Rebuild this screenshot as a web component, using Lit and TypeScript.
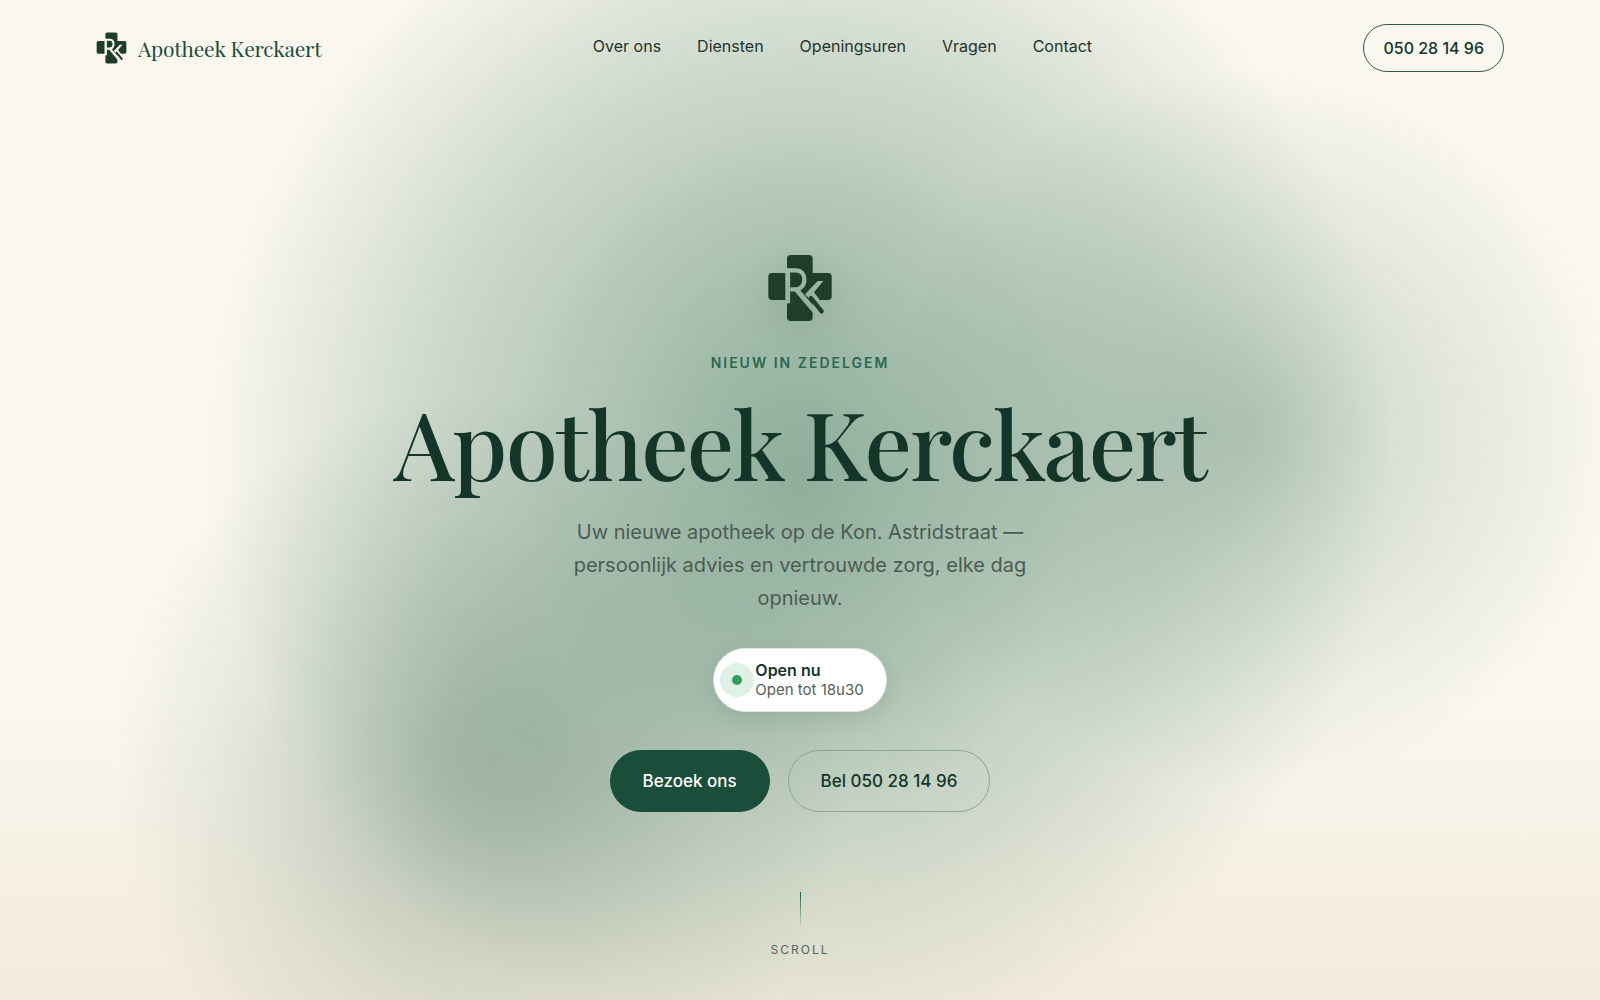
import { LitElement, html, css } from "lit";
import { customElement } from "lit/decorators.js";

@customElement("pharmacy-mark")
class PharmacyMark extends LitElement {
  static styles = css`
    :host {
      display: block;
    }
    .mark {
      display: block;
      width: 100%;
      height: 100%;
    }
  `;

  render() {
    return html`
      <svg class="mark" viewBox="81 42 198 204" aria-hidden="true">
        <mask id="cut" maskUnits="userSpaceOnUse" x="80" y="40" width="200" height="210">
          <rect x="80" y="40" width="200" height="210" fill="#fff" />
          <g fill="none" stroke="#000">
            <path d="M144 190V91H167C184 91 193 103 193 119C193 136 182 148 166 148H151" stroke-width="13" />
            <path d="M167 146L240 232" stroke-width="15" />
          </g>
          <path d="M136 84h8v106h-8zM233 123H250L222 157L242 184H218L206 174L195 163z" fill="#000" />
        </mask>
        <g fill="#1f3d2b" mask="url(#cut)">
          <rect x="141" y="45" width="77" height="198" rx="11" />
          <rect x="85" y="99" width="190" height="81" rx="11" />
        </g>
        <path d="M213 174L245 214" fill="none" stroke="#1f3d2b" stroke-width="13" stroke-linecap="round" />
      </svg>
    `;
  }
}

@customElement("app-root")
class AppRoot extends LitElement {
  static styles = css`
    :host {
      display: block;
      font-family: Inter, "Liberation Sans", sans-serif;
      font-size: 16px;
      color: #14352a;
    }
    a {
      color: inherit;
      text-decoration: none;
    }
    .page {
      box-sizing: border-box;
      min-height: 100vh;
      display: flex;
      flex-direction: column;
      background:
        radial-gradient(ellipse 17% 36% at 50% 48%, rgba(65, 120, 98, 0.3), rgba(65, 120, 98, 0.16) 45%, rgba(65, 120, 98, 0.04) 80%, rgba(65, 120, 98, 0) 100%),
        radial-gradient(ellipse 23% 36% at 78% 43%, rgba(70, 122, 95, 0.32), rgba(70, 122, 95, 0.28) 14%, rgba(70, 122, 95, 0.18) 40%, rgba(70, 122, 95, 0.1) 66%, rgba(70, 122, 95, 0.04) 88%, rgba(70, 122, 95, 0) 100%),
        radial-gradient(ellipse 23% 38% at 30% 77%, rgba(60, 105, 85, 0.38), rgba(60, 105, 85, 0.34) 16%, rgba(60, 105, 85, 0.22) 42%, rgba(60, 105, 85, 0.11) 66%, rgba(60, 105, 85, 0.04) 88%, rgba(60, 105, 85, 0) 100%),
        radial-gradient(ellipse 37% 61% at 50% 45%, rgba(80, 132, 106, 0.44), rgba(80, 132, 106, 0.38) 42%, rgba(80, 132, 106, 0.25) 65%, rgba(80, 132, 106, 0.07) 90%, rgba(80, 132, 106, 0) 100%),
        linear-gradient(#faf7ef 70%, #f2ebdb);
    }
    .header {
      display: flex;
      align-items: center;
      justify-content: space-between;
      padding: 24px 96px;
    }
    .brand {
      display: flex;
      align-items: center;
      gap: 11px;
      font-family: "Playfair Display", "Liberation Serif", serif;
      font-size: 21px;
      line-height: 28px;
      letter-spacing: -0.01em;
      color: #1b4d3b;
    }
    .brand-mark {
      width: 31px;
      height: 32px;
    }
    .nav {
      display: flex;
      gap: 36px;
      padding-bottom: 4px;
      color: #24332b;
    }
    .phone {
      padding: 13px 19px;
      border: 1px solid #2d5d49;
      border-radius: 24px;
      font-weight: 500;
      line-height: 20px;
    }
    .hero {
      flex: 1;
      display: flex;
      flex-direction: column;
      align-items: center;
      justify-content: center;
      padding-top: 78px;
      text-align: center;
    }
    .hero-mark {
      width: 66px;
      height: 68px;
      filter: drop-shadow(0 8px 16px rgba(20, 53, 42, 0.15));
    }
    .eyebrow {
      margin: 31px 0 0;
      font-size: 14px;
      line-height: 20px;
      font-weight: 600;
      letter-spacing: 2px;
      text-transform: uppercase;
      color: #2c6850;
    }
    .title {
      margin: 13px 0 0;
      font-family: "Playfair Display", "Liberation Serif", serif;
      font-size: 94px;
      line-height: 112px;
      font-weight: 500;
      letter-spacing: -0.02em;
    }
    .lead {
      max-width: 500px;
      margin: 18px 0 0;
      font-size: 20px;
      line-height: 33px;
      color: #4b5c52;
    }
    .status {
      display: flex;
      align-items: center;
      margin-top: 33px;
      padding: 12px 22px 12px 6px;
      border: 1px solid #dfe9e2;
      border-radius: 32px;
      background: #fff;
      box-shadow: 0 6px 20px rgba(20, 53, 42, 0.1);
      text-align: left;
    }
    .pulse {
      display: grid;
      place-items: center;
      width: 34px;
      height: 34px;
      margin-right: 1px;
      border-radius: 50%;
      background: #dff0e7;
    }
    .dot {
      width: 10px;
      height: 10px;
      border-radius: 50%;
      background: #2e9e5b;
    }
    .status-text {
      display: grid;
      line-height: 19px;
    }
    .status-title {
      font-weight: 600;
    }
    .status-note {
      font-size: 15px;
      color: #55605a;
    }
    .actions {
      display: flex;
      flex-wrap: wrap;
      justify-content: center;
      gap: 18px;
      margin-top: 38px;
    }
    .button {
      padding: 20px 32px;
      border: 1px solid #8ea697;
      border-radius: 31px;
      font-size: 17px;
      line-height: 20px;
      font-weight: 500;
    }
    .primary {
      border-color: #1b4d3b;
      background: #1b4d3b;
      color: #fff;
    }
    .scroll {
      display: flex;
      flex-direction: column;
      align-items: center;
      gap: 13px;
      padding-bottom: 41px;
      font-size: 12px;
      line-height: 18px;
      letter-spacing: 2px;
      text-transform: uppercase;
      color: #55645b;
    }
    .scroll-line {
      width: 1px;
      height: 36px;
      background: linear-gradient(#1b5d45, rgba(27, 93, 69, 0));
    }
  `;

  private links = [
    ["Over ons", "#over-ons"],
    ["Diensten", "#diensten"],
    ["Openingsuren", "#openingsuren"],
    ["Vragen", "#vragen"],
    ["Contact", "#contact"],
  ];

  render() {
    return html`
      <div class="page">
        <header class="header">
          <a class="brand" href="#top">
            <pharmacy-mark class="brand-mark"></pharmacy-mark>
            <span>Apotheek Kerckaert</span>
          </a>
          <nav class="nav">
            ${this.links.map(([label, href]) => html`<a href=${href}>${label}</a>`)}
          </nav>
          <a class="phone" href="tel:050281496">050 28 14 96</a>
        </header>
        <main class="hero">
          <pharmacy-mark class="hero-mark"></pharmacy-mark>
          <p class="eyebrow">Nieuw in Zedelgem</p>
          <h1 class="title">Apotheek Kerckaert</h1>
          <p class="lead">
            Uw nieuwe apotheek op de Kon. Astridstraat — persoonlijk advies en vertrouwde zorg, elke dag opnieuw.
          </p>
          <div class="status" role="status">
            <span class="pulse"><span class="dot"></span></span>
            <span class="status-text">
              <span class="status-title">Open nu</span>
              <span class="status-note">Open tot 18u30</span>
            </span>
          </div>
          <div class="actions">
            <a class="button primary" href="#contact">Bezoek ons</a>
            <a class="button" href="tel:050281496">Bel 050 28 14 96</a>
          </div>
        </main>
        <a class="scroll" href="#over-ons">
          <span class="scroll-line"></span>
          <span>Scroll</span>
        </a>
      </div>
    `;
  }
}
